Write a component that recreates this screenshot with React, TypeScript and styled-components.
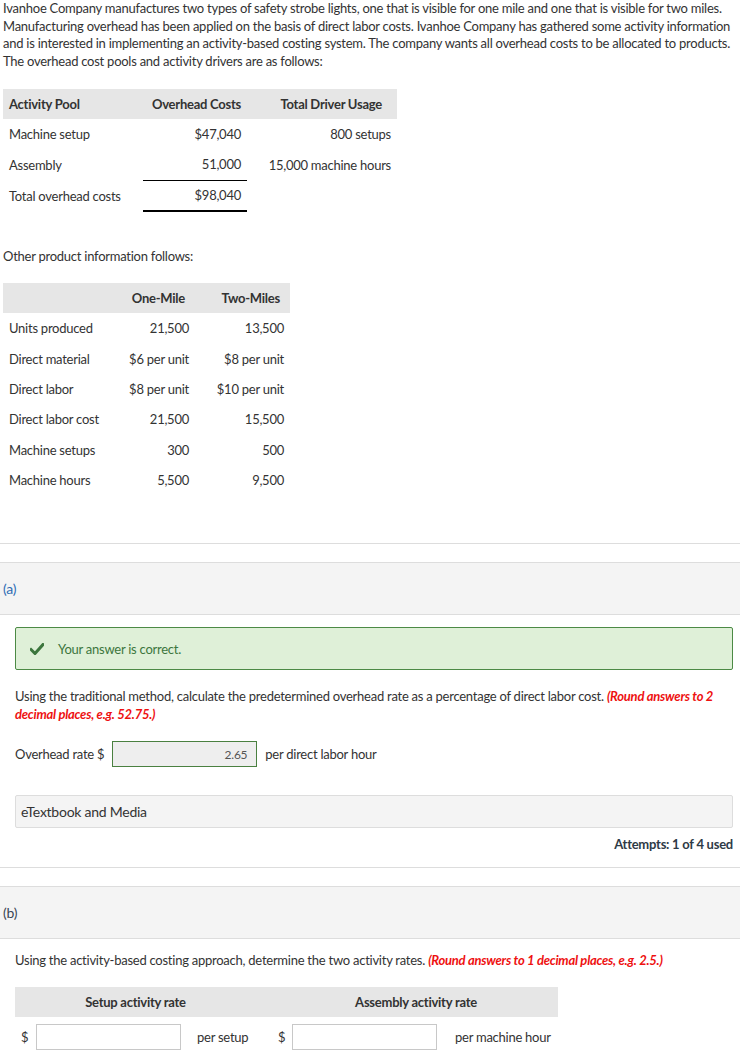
import React from 'react';
import styled, { createGlobalStyle } from 'styled-components';

const GlobalStyle = createGlobalStyle`
  html, body {
    margin: 0;
    padding: 0;
    background: #fff;
    overflow-x: hidden;
  }
  body {
    font-family: Lato, "Open Sans", Arial, sans-serif;
    font-size: 13px;
    letter-spacing: -0.25px;
    color: #333;
  }
`;

const Page = styled.div`
  width: 740px;
  overflow: hidden;
`;

const Intro = styled.div`
  padding: 0 3px;
`;

const Paragraph = styled.p`
  margin: 0;
  width: 745px;
  line-height: 17.5px;
`;

const Plain = styled.p<{ $top?: number }>`
  margin: ${(p) => p.$top ?? 0}px 0 0;
  line-height: 18px;
`;

const DataTable = styled.table<{ $top: number }>`
  border-collapse: collapse;
  margin-top: ${(p) => p.$top}px;
  table-layout: fixed;

  td {
    padding: 0 6px;
    text-align: right;
    white-space: nowrap;
  }
  td:first-child {
    text-align: left;
  }
`;

const HeadCell = styled.th<{ $padRight?: number; $left?: boolean }>`
  background: #e6e6e6;
  font-weight: 700;
  height: 30px;
  padding: 0 ${(p) => p.$padRight ?? 6}px 0 6px;
  text-align: ${(p) => (p.$left ? 'left' : 'right')};
  white-space: nowrap;
`;

const Row = styled.tr<{ $h: number }>`
  height: ${(p) => p.$h}px;
`;

const RuleCell = styled.td<{ $top?: boolean; $bottom?: boolean }>`
  border-top: ${(p) => (p.$top ? '1px solid #000' : 'none')};
  border-bottom: ${(p) => (p.$bottom ? '2px solid #000' : 'none')};
`;

const Divider = styled.div<{ $top: number }>`
  margin-top: ${(p) => p.$top}px;
  border-top: 1px solid #ddd;
`;

const PartHeader = styled.div<{ $accent?: boolean }>`
  margin-top: 18px;
  height: 51px;
  background: #f4f4f4;
  border-top: 1px solid #ddd;
  border-bottom: 1px solid #ddd;
  display: flex;
  align-items: center;
  padding-left: 3px;
  font-size: 14px;
  color: ${(p) => (p.$accent ? '#2f6db5' : '#3a4654')};
`;

const PartBody = styled.div`
  padding: 0 7px 0 15px;
`;

const Correct = styled.div`
  margin-top: 12px;
  height: 41px;
  background: #dff0d8;
  border: 1px solid #4c8a45;
  border-radius: 2px;
  display: flex;
  align-items: center;
  gap: 14px;
  padding-left: 14px;
  color: #3c763d;
`;

const Emph = styled.span`
  color: #ee1111;
  font-weight: 700;
  font-style: italic;
`;

const AnswerLine = styled.div`
  margin-top: 18px;
  display: flex;
  align-items: center;
  gap: 8px;
`;

const Input = styled.div<{ $filled?: boolean; $w: number }>`
  width: ${(p) => p.$w}px;
  height: 26px;
  box-sizing: border-box;
  border: 1px solid ${(p) => (p.$filled ? '#4a8040' : '#c8c8c8')};
  background: ${(p) => (p.$filled ? '#eeeeee' : '#fff')};
  display: flex;
  align-items: center;
  justify-content: flex-end;
  padding-right: 9px;
  font-size: 12px;
  color: #555;
`;

const MediaBox = styled.div`
  margin-top: 28px;
  height: 31px;
  background: #f4f4f4;
  border: 1px solid #ddd;
  border-radius: 2px;
  display: flex;
  align-items: center;
  padding-left: 5px;
  font-size: 14px;
  color: #333;
`;

const Attempts = styled.div`
  margin-top: 7px;
  line-height: 18px;
  text-align: right;
  font-weight: 700;
  color: #2e3a46;
`;

const RateGrid = styled.div`
  margin-top: 18px;
  width: 543px;
  display: grid;
  grid-template-columns: 21px 146px 92px 18px 146px 120px;
`;

const RateHead = styled.div<{ $padRight?: number }>`
  grid-column: span 3;
  height: 30px;
  background: #e6e6e6;
  display: flex;
  align-items: center;
  justify-content: center;
  padding-right: ${(p) => p.$padRight ?? 0}px;
  font-weight: 700;
  color: #333;
`;

const RateCell = styled.div<{ $indent?: number }>`
  height: 40px;
  display: flex;
  align-items: center;
  padding-left: ${(p) => p.$indent ?? 0}px;
`;

const Check = () => (
  <svg width="14" height="12" viewBox="0 0 14 12">
    <path d="M1 6.5 L5 10.5 L13 1.5" fill="none" stroke="#3c763d" strokeWidth="3" strokeLinecap="square" />
  </svg>
);

const products = [
  ['Units produced', '21,500', '13,500'],
  ['Direct material', '$6 per unit', '$8 per unit'],
  ['Direct labor', '$8 per unit', '$10 per unit'],
  ['Direct labor cost', '21,500', '15,500'],
  ['Machine setups', '300', '500'],
  ['Machine hours', '5,500', '9,500'],
];

export default function App() {
  return (
    <Page>
      <GlobalStyle />
      <Intro>
        <Paragraph>
          Ivanhoe Company manufactures two types of safety strobe lights, one that is visible for one mile and one that is
          visible for two miles. Manufacturing overhead has been applied on the basis of direct labor costs. Ivanhoe Company
          has gathered some activity information and is interested in implementing an activity-based costing system. The
          company wants all overhead costs to be allocated to products. The overhead cost pools and activity drivers are as
          follows:
        </Paragraph>

        <DataTable $top={19}>
          <colgroup>
            <col style={{ width: 140 }} />
            <col style={{ width: 104 }} />
            <col style={{ width: 150 }} />
          </colgroup>
          <thead>
            <tr>
              <HeadCell $left>Activity Pool</HeadCell>
              <HeadCell>Overhead Costs</HeadCell>
              <HeadCell $padRight={15}>Total Driver Usage</HeadCell>
            </tr>
          </thead>
          <tbody>
            <Row $h={30}>
              <td>Machine setup</td>
              <td>$47,040</td>
              <td>800 setups</td>
            </Row>
            <Row $h={31}>
              <td>Assembly</td>
              <td>51,000</td>
              <td>15,000 machine hours</td>
            </Row>
            <Row $h={31}>
              <td>Total overhead costs</td>
              <RuleCell $top $bottom>$98,040</RuleCell>
              <td />
            </Row>
          </tbody>
        </DataTable>

        <Plain $top={35}>Other product information follows:</Plain>

        <DataTable $top={18}>
          <colgroup>
            <col style={{ width: 107 }} />
            <col style={{ width: 85 }} />
            <col style={{ width: 95 }} />
          </colgroup>
          <thead>
            <tr>
              <HeadCell $left />
              <HeadCell $padRight={10}>One-Mile</HeadCell>
              <HeadCell $padRight={10}>Two-Miles</HeadCell>
            </tr>
          </thead>
          <tbody>
            {products.map(([label, one, two]) => (
              <Row $h={30.4} key={label}>
                <td>{label}</td>
                <td>{one}</td>
                <td>{two}</td>
              </Row>
            ))}
          </tbody>
        </DataTable>
      </Intro>

      <Divider $top={48} />
      <PartHeader $accent>(a)</PartHeader>
      <PartBody>
        <Correct>
          <Check />
          <span>Your answer is correct.</span>
        </Correct>
        <Plain $top={17}>
          Using the traditional method, calculate the predetermined overhead rate as a percentage of direct labor cost.{' '}
          <Emph>(Round answers to 2 decimal places, e.g. 52.75.)</Emph>
        </Plain>
        <AnswerLine>
          <span>Overhead rate $</span>
          <Input $filled $w={145}>2.65</Input>
          <span>per direct labor hour</span>
        </AnswerLine>
        <MediaBox>eTextbook and Media</MediaBox>
        <Attempts>Attempts: 1 of 4 used</Attempts>
      </PartBody>

      <Divider $top={14} />
      <PartHeader>(b)</PartHeader>
      <PartBody>
        <Plain $top={12}>
          Using the activity-based costing approach, determine the two activity rates.{' '}
          <Emph>(Round answers to 1 decimal places, e.g. 2.5.)</Emph>
        </Plain>
        <RateGrid>
          <RateHead $padRight={18}>Setup activity rate</RateHead>
          <RateHead>Assembly activity rate</RateHead>
          <RateCell $indent={6}>$</RateCell>
          <RateCell>
            <Input $w={145} />
          </RateCell>
          <RateCell $indent={15}>per setup</RateCell>
          <RateCell $indent={4}>$</RateCell>
          <RateCell>
            <Input $w={145} />
          </RateCell>
          <RateCell $indent={17}>per machine hour</RateCell>
        </RateGrid>
      </PartBody>
    </Page>
  );
}
